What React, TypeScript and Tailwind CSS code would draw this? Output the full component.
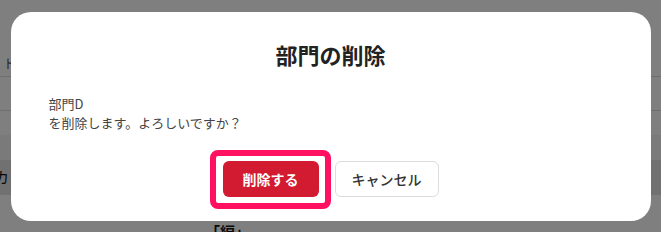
import React from 'react';

const font = { fontFamily: '"Noto Sans CJK JP", "Noto Sans", sans-serif' };

function BackgroundPage() {
  return (
    <div className="h-[232px] w-[661px] overflow-hidden bg-white text-[13px] text-[#333]">
      <div className="h-[50px]" />
      <div className="flex h-[27px] items-center border-b border-[#dedede] pl-[3px] text-[#555]">ト</div>
      <div className="h-[34px] border-b border-[#dedede]" />
      <div className="h-[24px]" />
      <div className="h-[25px] bg-[#f4f4f4]" />
      <div className="flex h-[35px] items-center bg-[#e2e2e2] text-[15px] text-[#111]">
        <span className="-ml-[6px]">カ</span>
      </div>
      <div className="flex h-[37px] items-start pl-[205px] pt-[27px] text-[15px] font-bold leading-[20px] text-[#111]">
        <span>「編」</span>
      </div>
    </div>
  );
}

export default function App() {
  return (
    <div className="relative h-[232px] w-[661px] overflow-hidden" style={font}>
      <BackgroundPage />

      <div className="absolute inset-0 flex justify-center bg-black/50 pt-[12px]">
        <div className="flex h-[209px] w-[640px] flex-col rounded-[20px] bg-white px-[38px] pb-[24px] pt-[26px]">
          <h2 className="text-center text-[22px] font-bold leading-[32px] text-[#222]">部門の削除</h2>

          <div className="mt-[24px] text-[13px] leading-[19px] text-[#444]">
            <p>部門D</p>
            <p>を削除します。よろしいですか？</p>
          </div>

          <div className="mt-[29px] flex justify-center gap-[16px]">
            <div className="relative">
              <button className="h-[36px] w-[96px] rounded-[6px] bg-[#d21a30] text-[14px] font-bold text-white">
                削除する
              </button>
              <span className="pointer-events-none absolute -bottom-[12px] -left-[13px] -right-[12px] -top-[11px] rounded-[8px] border-[6px] border-[#ff1060]" />
            </div>
            <button className="h-[36px] w-[104px] rounded-[6px] border border-[#dcdcdc] bg-white text-[14px] font-medium text-[#333]">
              キャンセル
            </button>
          </div>
        </div>
      </div>
    </div>
  );
}
